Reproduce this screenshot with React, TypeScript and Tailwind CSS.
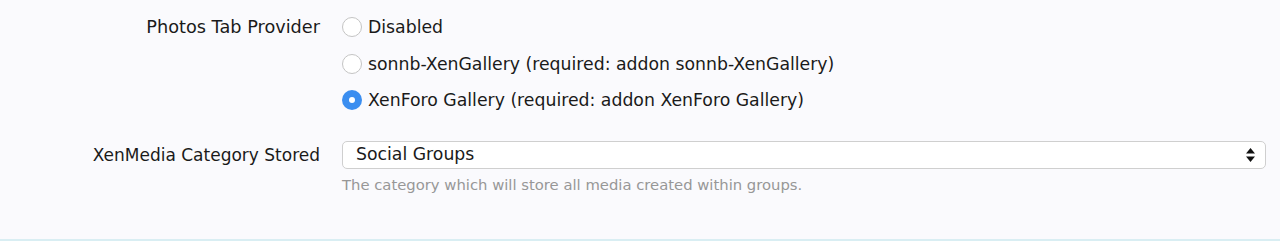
import React from "react";

function Radio({ checked }: { checked?: boolean }) {
  if (checked) {
    return (
      <span className="flex h-[20px] w-[20px] shrink-0 items-center justify-center rounded-full bg-[#3b8ef0]">
        <span className="h-[6px] w-[6px] rounded-full bg-white" />
      </span>
    );
  }
  return (
    <span className="h-[20px] w-[20px] shrink-0 rounded-full border border-[#c4c4c4] bg-white" />
  );
}

export default function App() {
  const options = [
    { label: "Disabled", checked: false },
    { label: "sonnb-XenGallery (required: addon sonnb-XenGallery)", checked: false },
    { label: "XenForo Gallery (required: addon XenForo Gallery)", checked: true },
  ];
  return (
    <div
      className="flex h-[241px] w-[1280px] flex-col bg-[#fafafd] text-[#1a1a1a]"
      style={{ fontFamily: "Tahoma, 'DejaVu Sans', sans-serif" }}
    >
      <div className="flex flex-1 flex-col border-b-2 border-[#d9eef3]">
        <div className="flex pt-[10px]">
          <div className="w-[320px] pt-[7px] text-right text-[17.7px] leading-[20px]">Photos Tab Provider</div>
          <div className="ml-[22px] flex flex-col gap-[16.5px] pt-[7px]">
            {options.map((o) => (
              <div key={o.label} className="flex items-center gap-[6px] text-[17.3px] leading-[20px]">
                <Radio checked={o.checked} />
                <span>{o.label}</span>
              </div>
            ))}
          </div>
        </div>
        <div className="mt-[31px] flex">
          <div className="w-[320px] pt-[4px] text-right text-[17px] leading-[20px]">XenMedia Category Stored</div>
          <div className="ml-[22px] flex flex-1 flex-col pr-[14px]">
            <div className="flex h-[28px] items-center justify-between rounded-[5px] border border-[#cfcfcf] bg-white pl-[13px] pr-[10px] text-[17.3px]">
              <span>Social Groups</span>
              <svg width="9" height="14" viewBox="0 0 9 14">
                <path d="M4.5 0 L9 5.5 L0 5.5 Z" fill="#111" />
                <path d="M0 8.5 L9 8.5 L4.5 14 Z" fill="#111" />
              </svg>
            </div>
            <div className="mt-[7px] text-[14.8px] leading-[18px] text-[#979797]">
              The category which will store all media created within groups.
            </div>
          </div>
        </div>
      </div>
    </div>
  );
}
